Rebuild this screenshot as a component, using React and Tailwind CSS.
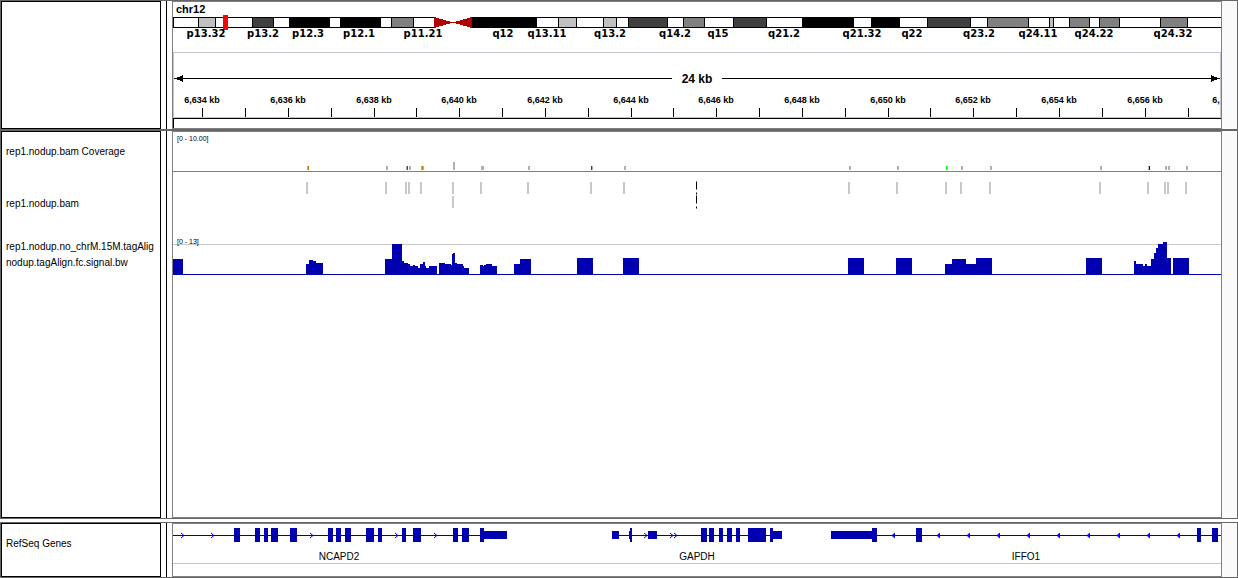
import React from "react";

// Horizontal extent of the data panels. Every x below is in these units.
const START = 173;
const SPAN = 1048;

const BLUE = "#0000b0";
const GRAY = "#b0b0b0";

const pos = (x) => `${((x - START) / SPAN) * 100}%`;
const len = (w) => `${(w / SPAN) * 100}%`;

const STAINS = {
  light: "#c0c0c0",
  mid: "#808080",
  dark: "#404040",
  black: "#000000",
};

// [start, end, stain]
const BANDS = [
  [198, 216, "light"],
  [252, 274, "dark"],
  [289, 330, "black"],
  [340, 381, "black"],
  [391, 414, "mid"],
  [472, 537, "black"],
  [558, 577, "light"],
  [603, 617, "light"],
  [628, 668, "dark"],
  [683, 705, "mid"],
  [733, 767, "dark"],
  [802, 854, "black"],
  [871, 900, "black"],
  [927, 971, "dark"],
  [987, 1029, "mid"],
  [1049, 1054, "light"],
  [1069, 1090, "mid"],
  [1099, 1120, "mid"],
  [1160, 1188, "mid"],
];

const BAND_LABELS = [
  [206, "p13.32"],
  [263, "p13.2"],
  [308, "p12.3"],
  [359, "p12.1"],
  [423, "p11.21"],
  [503, "q12"],
  [547, "q13.11"],
  [610, "q13.2"],
  [675, "q14.2"],
  [718, "q15"],
  [784, "q21.2"],
  [862, "q21.32"],
  [912, "q22"],
  [979, "q23.2"],
  [1038, "q24.11"],
  [1094, "q24.22"],
  [1173, "q24.32"],
];

const RULER_LABELS = [
  [202, "6,634 kb"],
  [288, "6,636 kb"],
  [374, "6,638 kb"],
  [459, "6,640 kb"],
  [545, "6,642 kb"],
  [631, "6,644 kb"],
  [716, "6,646 kb"],
  [802, "6,648 kb"],
  [888, "6,650 kb"],
  [973, "6,652 kb"],
  [1059, "6,654 kb"],
  [1145, "6,656 kb"],
  [1216, "6,"],
];

const RULER_TICKS = [
  202, 245, 288, 331, 374, 416, 459, 502, 545, 588, 631, 673, 716, 759, 802,
  845, 888, 930, 973, 1016, 1059, 1102, 1145, 1188,
];

// [x, width, height, color]
const COVERAGE = [
  [307, 1, 4, GRAY],
  [308, 1, 4, "#d07000"],
  [386, 2, 4, GRAY],
  [406, 1, 4, GRAY],
  [407, 1, 4, "#d80000"],
  [409, 2, 4, GRAY],
  [421, 3, 4, GRAY],
  [422, 1, 4, "#d07000"],
  [453, 2, 8, GRAY],
  [481, 3, 4, GRAY],
  [528, 2, 4, GRAY],
  [591, 1, 4, "#d80000"],
  [592, 1, 4, GRAY],
  [624, 2, 4, GRAY],
  [849, 2, 4, GRAY],
  [897, 2, 4, GRAY],
  [946, 1, 4, "#00ff00"],
  [947, 1, 4, GRAY],
  [961, 2, 4, GRAY],
  [990, 2, 4, GRAY],
  [1100, 2, 4, GRAY],
  [1148, 1, 4, GRAY],
  [1149, 1, 4, "#0000d0"],
  [1165, 2, 4, GRAY],
  [1168, 2, 4, GRAY],
  [1186, 2, 4, GRAY],
];

// [x, row]
const READS = [
  [306, 0],
  [385, 0],
  [405, 0],
  [408, 0],
  [420, 0],
  [452, 0],
  [452, 1],
  [480, 0],
  [527, 0],
  [590, 0],
  [623, 0],
  [848, 0],
  [896, 0],
  [945, 0],
  [960, 0],
  [989, 0],
  [1099, 0],
  [1147, 0],
  [1164, 0],
  [1167, 0],
  [1185, 0],
];

// [start, end, height]
const SIGNAL = [
  [173, 183, 15],
  [306, 309, 10],
  [309, 313, 14],
  [313, 316, 13],
  [316, 323, 11],
  [385, 392, 15],
  [392, 402, 30],
  [402, 404, 13],
  [404, 408, 11],
  [408, 410, 10],
  [410, 413, 8],
  [413, 415, 9],
  [415, 418, 8],
  [418, 420, 6],
  [420, 423, 10],
  [423, 425, 12],
  [425, 426, 8],
  [426, 429, 6],
  [429, 437, 8],
  [439, 445, 11],
  [445, 451, 10],
  [451, 452, 9],
  [452, 453, 20],
  [453, 455, 21],
  [455, 457, 11],
  [457, 463, 10],
  [463, 464, 8],
  [464, 469, 6],
  [480, 483, 9],
  [483, 484, 8],
  [484, 486, 9],
  [486, 492, 10],
  [492, 497, 8],
  [514, 520, 10],
  [520, 531, 15],
  [577, 593, 16],
  [623, 639, 16],
  [848, 864, 16],
  [896, 912, 16],
  [945, 952, 10],
  [952, 966, 15],
  [966, 976, 10],
  [976, 992, 16],
  [1086, 1102, 16],
  [1134, 1136, 13],
  [1136, 1143, 10],
  [1143, 1145, 8],
  [1145, 1147, 10],
  [1147, 1151, 8],
  [1151, 1154, 15],
  [1154, 1156, 21],
  [1156, 1158, 26],
  [1158, 1163, 30],
  [1163, 1167, 32],
  [1167, 1171, 16],
  [1173, 1189, 16],
];

const GENES = [
  {
    name: "NCAPD2",
    start: 173,
    end: 507,
    label: 339,
    strand: "+",
    arrows: [184, 214, 313, 398, 437],
    exons: [
      [234, 240],
      [255, 260],
      [264, 268],
      [271, 278],
      [290, 297],
      [328, 333],
      [336, 341],
      [345, 351],
      [366, 374],
      [378, 382],
      [402, 406],
      [413, 421],
      [453, 458],
      [462, 469],
      [480, 484],
    ],
    utrs: [[484, 507]],
  },
  {
    name: "GAPDH",
    start: 612,
    end: 782,
    label: 697,
    strand: "+",
    arrows: [647, 673, 677],
    exons: [
      [630, 632],
      [701, 707],
      [709, 714],
      [719, 723],
      [727, 732],
      [736, 740],
      [748, 766],
      [770, 773],
    ],
    utrs: [
      [612, 619],
      [629, 630],
      [648, 657],
      [773, 782],
    ],
  },
  {
    name: "IFFO1",
    start: 831,
    end: 1221,
    label: 1026,
    strand: "-",
    arrows: [892, 937, 967, 997, 1027, 1057, 1087, 1117, 1147, 1177],
    exons: [
      [872, 877],
      [916, 922],
      [1197, 1201],
      [1212, 1218],
    ],
    utrs: [[831, 872]],
  },
];

function Bar({ x, w, y, h, fill }) {
  return <rect x={pos(x)} width={len(w)} y={y} height={h} fill={fill} />;
}

function Rule({ y, fill }) {
  return <rect x="0" width="100%" y={y} height="1" fill={fill} />;
}

function Ideogram() {
  return (
    <svg className="block w-full h-[50px]" shapeRendering="crispEdges">
      <text x={pos(176)} y="11" className="text-[11px] font-bold">
        chr12
      </text>
      <Bar x={173} w={261} y={15} h={11} fill="#000" />
      <Bar x={472} w={749} y={15} h={11} fill="#000" />
      <Bar x={174} w={260} y={16} h={9} fill="#fff" />
      <Bar x={473} w={748} y={16} h={9} fill="#fff" />
      {BANDS.map(([start, end, stain]) => (
        <g key={start}>
          <Bar x={start} w={end - start} y={15} h={11} fill="#000" />
          <Bar
            x={start + 1}
            w={end - start - 2}
            y={16}
            h={9}
            fill={STAINS[stain]}
          />
        </g>
      ))}
      <svg x={pos(434)} y="15" className="overflow-visible">
        <path d="M0 0 L19 5.5 L0 11 Z M38 0 L19 5.5 L38 11 Z" fill="#b00000" />
      </svg>
      <Bar x={223} w={5} y={13} h={15} fill="#ff0000" />
      {BAND_LABELS.map(([x, text]) => (
        <text
          key={text}
          x={pos(x)}
          y="35"
          textAnchor="middle"
          className="text-[10px] font-bold font-['DejaVu_Sans',sans-serif]"
        >
          {text}
        </text>
      ))}
    </svg>
  );
}

function Ruler() {
  return (
    <svg className="block w-full h-[66px]" shapeRendering="crispEdges">
      <Rule y={0} fill="#c4c4d0" />
      <Rule y={65} fill="#c4c4d0" />
      <Bar x={173} w={1} y={0} h={66} fill="#c4c4d0" />
      <Bar x={1220} w={1} y={0} h={66} fill="#c4c4d0" />

      <Bar x={174} w={498} y={26} h={1} fill="#000" />
      <Bar x={722} w={498} y={26} h={1} fill="#000" />
      <svg x={pos(175)} y="23" className="overflow-visible">
        <path d="M0 3.5 L8 0 L8 7 Z" />
      </svg>
      <svg x={pos(1219)} y="23" className="overflow-visible">
        <path d="M0 3.5 L-8 0 L-8 7 Z" />
      </svg>
      <text
        x={pos(697)}
        y="31"
        textAnchor="middle"
        className="text-xs font-bold"
      >
        24 kb
      </text>

      {RULER_TICKS.map((x) => (
        <Bar key={x} x={x} w={1} y={56} h={9} fill="#000" />
      ))}
      {RULER_LABELS.map(([x, text]) => (
        <text
          key={text}
          x={pos(x)}
          y="51"
          textAnchor="middle"
          className="text-[9px] font-bold"
        >
          {text}
        </text>
      ))}
    </svg>
  );
}

function CoverageTrack() {
  return (
    <svg className="block w-full h-10" shapeRendering="crispEdges">
      <text x={pos(177)} y="9" className="text-[7px]">
        [0 - 10.00]
      </text>
      {COVERAGE.map(([x, w, h, fill]) => (
        <Bar key={x} x={x} w={w} y={38 - h} h={h} fill={fill} />
      ))}
      <Rule y={39} fill="#808080" />
    </svg>
  );
}

function ReadsTrack() {
  return (
    <svg className="block w-full h-16" shapeRendering="crispEdges">
      {READS.map(([x, row]) => (
        <Bar
          key={`${x}-${row}`}
          x={x}
          w={2}
          y={10 + row * 14}
          h={12}
          fill="#c8c8c8"
        />
      ))}
      {/* center line */}
      <Bar x={696} w={1} y={9} h={9} fill="#808080" />
      <Bar x={696} w={1} y={10} h={7} fill="#000" />
      <Bar x={696} w={1} y={20} h={12} fill="#808080" />
      <Bar x={696} w={1} y={21} h={1} fill="#000" />
      <Bar x={696} w={1} y={24} h={7} fill="#000" />
      <Bar x={696} w={1} y={34} h={3} fill="#808080" />
      <Bar x={696} w={1} y={35} h={1} fill="#000" />
    </svg>
  );
}

function SignalTrack() {
  return (
    <svg className="block w-full h-[39px]" shapeRendering="crispEdges">
      <Rule y={8} fill="#c8c8c8" />
      {SIGNAL.map(([start, end, h]) => (
        <Bar
          key={start}
          x={start}
          w={end - start}
          y={38 - h}
          h={h}
          fill={BLUE}
        />
      ))}
      <Rule y={38} fill={BLUE} />
      <text x={pos(177)} y="8" className="text-[7px]">
        [0 - 13]
      </text>
    </svg>
  );
}

function Gene({ gene }) {
  const forward = gene.strand === "+";

  return (
    <g>
      <Bar
        x={gene.start}
        w={gene.end - gene.start}
        y={11}
        h={1}
        fill={BLUE}
      />
      {gene.arrows.map((x) => (
        <svg key={x} x={pos(x)} y="11.5" className="overflow-visible">
          <path
            d={forward ? "M-3 -2.5 L0 0 L-3 2.5" : "M3 -2.5 L0 0 L3 2.5"}
            fill={forward ? "none" : "#0000ff"}
            stroke="#0000ff"
            shapeRendering="geometricPrecision"
          />
        </svg>
      ))}
      {gene.utrs.map(([start, end]) => (
        <Bar key={start} x={start} w={end - start} y={7} h={8} fill={BLUE} />
      ))}
      {gene.exons.map(([start, end]) => (
        <Bar key={start} x={start} w={end - start} y={4} h={14} fill={BLUE} />
      ))}
      <text
        x={pos(gene.label)}
        y="36"
        textAnchor="middle"
        className="text-[10px]"
      >
        {gene.name}
      </text>
    </g>
  );
}

function GeneTrack() {
  return (
    <svg className="block w-full h-10" shapeRendering="crispEdges">
      {GENES.map((gene) => (
        <Gene key={gene.name} gene={gene} />
      ))}
      <Rule y={39} fill="#c4c4d0" />
    </svg>
  );
}

function Panel({ names, children, className = "" }) {
  return (
    <section className={`flex border border-[#666] ${className}`}>
      <div className="w-40 shrink-0 overflow-hidden border border-black">
        {names}
      </div>
      <div className="mx-[5px] w-px shrink-0 bg-black" />
      <div className="min-w-0 flex-1 overflow-hidden border border-[#808080]">
        {children}
      </div>
      <div className="w-[15px] shrink-0 bg-[#fafafa]" />
    </section>
  );
}

export default function App() {
  return (
    <main className="flex min-h-screen flex-col bg-white font-['Liberation_Sans',Arial,sans-serif] text-black">
      <Panel>
        <Ideogram />
        <Ruler />
        <div className="h-[10px] border-t border-l border-black" />
      </Panel>

      <Panel
        className="flex-1"
        names={
          <ul className="pl-1 text-[10px] leading-4 whitespace-nowrap">
            <li className="flex h-10 items-center">rep1.nodup.bam Coverage</li>
            <li className="flex h-16 items-center">rep1.nodup.bam</li>
            <li className="flex h-[37px] flex-col justify-center">
              <span>rep1.nodup.no_chrM.15M.tagAlig</span>
              <span>nodup.tagAlign.fc.signal.bw</span>
            </li>
          </ul>
        }
      >
        <CoverageTrack />
        <ReadsTrack />
        <SignalTrack />
      </Panel>

      <Panel
        className="mt-[3px]"
        names={
          <ul className="pl-1 text-[10px] leading-4">
            <li className="flex h-10 items-center">RefSeq Genes</li>
          </ul>
        }
      >
        <GeneTrack />
        <div className="h-3" />
      </Panel>
    </main>
  );
}
